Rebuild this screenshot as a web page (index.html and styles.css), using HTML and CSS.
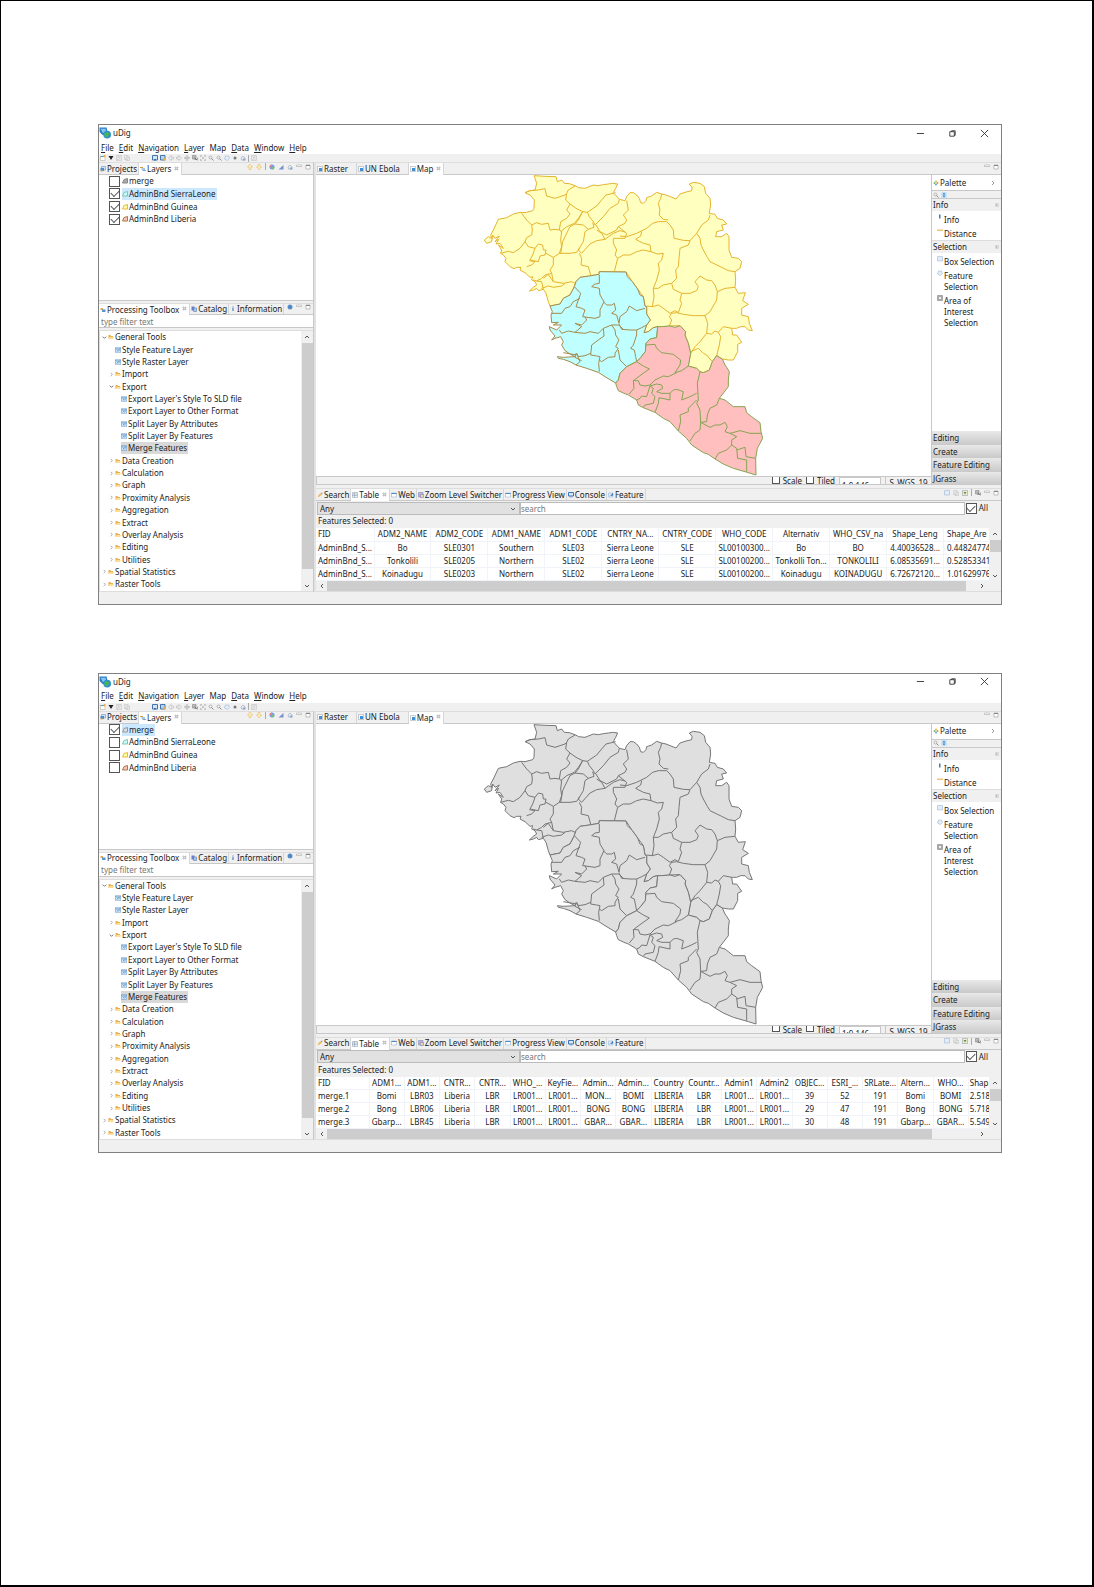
FILE: index.html
```
<!DOCTYPE html>
<html lang="en">
<head>
    <meta charset="UTF-8">
    <meta name="viewport" content="width=device-width, initial-scale=1.0">
    <title>uDig - Merge Features</title>
    <link rel="stylesheet" href="styles.css">
</head>
<body>
    <!-- Icons and the map, drawn once and reused in both windows -->
    <svg class="sprite" aria-hidden="true">
        <symbol id="i-app" viewBox="0 0 22 22"><path d="M1 1h13l2 11-9 3-6-6z" fill="#2a7fc9"/><path d="M3 3h9l1 6-6 2z" fill="#8cc6ee"/><circle cx="15" cy="14" r="7" fill="#2f8fd0"/><path d="M10 11l6-2 3 4-4 6-5-2z" fill="#46b558"/></symbol>
        <symbol id="i-folder" viewBox="0 0 12 12"><path d="M1 2h4l1 2h4v6H1z" fill="#e9b04f"/><path d="M3 6h9l-2 4H1z" fill="#ffdd92"/></symbol>
        <symbol id="i-tool" viewBox="0 0 12 12"><path d="M0 1h12v10H0z" fill="#5c96cf"/><path d="M1 3h10v7H1z" fill="#d3e6f7"/><path d="M3 4l4 5M8 4l-4 5M9 4v3" stroke="#3873b3" fill="none"/></symbol>
        <symbol id="i-map" viewBox="0 0 12 12"><path d="M1 1h10v10H1z" fill="#fff" stroke="#8a9aaa"/><path d="M4 4h6v6H4z" fill="#3d8fd6"/></symbol>
        <symbol id="i-projects" viewBox="0 0 12 12"><path d="M3 1h8v7H3z" fill="#cfe0f2" stroke="#5c86b4"/><path d="M1 4h7v6H1z" fill="#4f8dca"/><path d="M1 9h5v2H1z" fill="#e8b254"/></symbol>
        <symbol id="i-layers" viewBox="0 0 12 12"><path d="M0 2h6v2H0z" fill="#d89a3c"/><path d="M3 5h7v2H3z" fill="#4b8acb"/><path d="M5 8h7v2H5z" fill="#7aa6d6"/></symbol>
        <symbol id="i-toolbox" viewBox="0 0 12 12"><path d="M1 2h5v4H1z" fill="#e3a94a"/><path d="M4 5h7v5H4z" fill="#5a93cd"/></symbol>
        <symbol id="i-catalog" viewBox="0 0 12 12"><path d="M1 1h6v8H1z" fill="#6b7fc8"/><path d="M5 4h6v7H5z" fill="#a9c4ec" stroke="#4a6cb0"/></symbol>
        <symbol id="i-info" viewBox="0 0 12 12"><path d="M5 1h2v2H5zM5 4h2v6H5z" fill="#2f6fb3"/></symbol>
        <symbol id="i-close" viewBox="0 0 12 12"><path d="M2 2l8 8M10 2l-8 8" stroke="#9a9a9a" stroke-width="3"/><path d="M2 2l8 8M10 2l-8 8" stroke="#fff"/></symbol>
        <symbol id="i-search" viewBox="0 0 12 12"><path d="M1 9l5-6 4 2-6 5z" fill="#efb955"/><path d="M7 2l4-1-1 4z" fill="#8897a8"/></symbol>
        <symbol id="i-table" viewBox="0 0 12 12"><path d="M1 1h10v10H1z" fill="#eef3f9" stroke="#8495ad"/><path d="M1 4h10M1 7h10M5 1v10" stroke="#8495ad"/></symbol>
        <symbol id="i-window" viewBox="0 0 12 12"><path d="M1 2h10v8H1z" fill="#fff" stroke="#84a5c8"/><path d="M1 2h10v2H1z" fill="#4b8acb"/></symbol>
        <symbol id="i-zoomlevel" viewBox="0 0 12 12"><path d="M1 1h9v9H1z" fill="#b7b6dc" stroke="#7877ad"/><path d="M5 5h6v6H5z" fill="#e8dcb0" stroke="#7877ad"/></symbol>
        <symbol id="i-console" viewBox="0 0 12 12"><path d="M1 1h10v7H1z" fill="#d8e8fa" stroke="#3f74b5" stroke-width="2"/><path d="M3 10h6" stroke="#3f74b5"/></symbol>
        <symbol id="i-feature" viewBox="0 0 12 12"><path d="M1 2h9v8H1z" fill="#dce9f8" stroke="#8fb0d6"/><path d="M4 8l6-6v5z" fill="#2f6fc0"/></symbol>
        <symbol id="i-globe" viewBox="0 0 12 12"><circle cx="6" cy="6" r="5" fill="#5e96d4"/><path d="M2 6h8M6 2v8" stroke="#3a6ea8"/></symbol>
        <symbol id="i-search-mode" viewBox="0 0 12 12"><path d="M0 0h12v12H0z" fill="#cce4f7"/><path d="M6 1l3 4H3zM6 11L3 7h6z" fill="#2f7fc6"/></symbol>
        <symbol id="i-up" viewBox="0 0 12 12"><path d="M6 0l5 6H8v5H4V6H1z" fill="#fff0c0" stroke="#e2b14c"/></symbol>
        <symbol id="i-down" viewBox="0 0 12 12"><path d="M6 12L1 6h3V1h4v5h3z" fill="#fff0c0" stroke="#e2b14c"/></symbol>
        <symbol id="i-palette" viewBox="0 0 12 12"><circle cx="6" cy="3" r="2" fill="#e6b84a"/><circle cx="3" cy="6" r="2" fill="#72b86a"/><circle cx="9" cy="6" r="2" fill="#e58b4e"/><circle cx="6" cy="9" r="2" fill="#57a4d8"/></symbol>
        <symbol id="i-color" viewBox="0 0 12 12"><circle cx="6" cy="6" r="5" fill="#7b9be8"/><path d="M6 6V1a5 5 0 0 0-5 5z" fill="#e9837d"/><path d="M6 6h5a5 5 0 0 1-5 5z" fill="#78c07a"/></symbol>
        <symbol id="i-chart" viewBox="0 0 12 12"><path d="M1 11l10-9v9z" fill="#7a8fcf"/></symbol>
        <symbol id="i-edit" viewBox="0 0 12 12"><path d="M2 6l4-4 4 4-1 4H3z" fill="#e8eef5" stroke="#7f93ad"/><path d="M6 7h5v4H6z" fill="#8fa9c9"/></symbol>
        <symbol id="i-min" viewBox="0 0 12 12"><path d="M1 2h10v3H1z" fill="#fff" stroke="#999"/></symbol>
        <symbol id="i-max" viewBox="0 0 12 12"><path d="M2 2h8v8H2z" fill="#fff" stroke="#888"/><path d="M2 3h8" stroke="#888" stroke-width="2"/></symbol>
        <symbol id="i-new" viewBox="0 0 12 12"><path d="M1 3h9v8H1z" fill="#fff" stroke="#a9a58f"/><path d="M1 3h8" stroke="#5c96cf" stroke-width="2"/><path d="M9 0v5M7 2h5" stroke="#e7b347" stroke-width="2"/></symbol>
        <symbol id="i-caret" viewBox="0 0 12 12"><path d="M1 2h10l-5 8z" fill="#222"/></symbol>
        <symbol id="i-save" viewBox="0 0 12 12"><path d="M1 1h10v10H1z" fill="#eee" stroke="#bbb"/><path d="M4 1v4h4V1M3 11V8h6" stroke="#bbb" fill="none"/></symbol>
        <symbol id="i-copy" viewBox="0 0 12 12"><path d="M1 1h7v8H1zM4 4h7v7H4z" fill="#eee" stroke="#bbb"/></symbol>
        <symbol id="i-disk" viewBox="0 0 12 12"><path d="M1 1h10v9H1z" fill="#d3e4f5" stroke="#4374ad" stroke-width="2"/><path d="M4 8h4v3H4z" fill="#4374ad"/></symbol>
        <symbol id="i-export" viewBox="0 0 12 12"><path d="M1 1h9v9H1z" fill="#bcd5ee" stroke="#4374ad" stroke-width="2"/><path d="M6 6h6v5H6z" fill="#e2b04d"/></symbol>
        <symbol id="i-filter" viewBox="0 0 12 12"><path d="M1 1h10v10H1z" fill="#f4efc8" stroke="#7f93ad"/><path d="M3 4h6L6 9z" fill="#5f8f4a"/></symbol>
        <symbol id="i-back" viewBox="0 0 12 12"><path d="M1 6l5-5v3h5v4H6v3z" fill="#eee" stroke="#aaa"/></symbol>
        <symbol id="i-forward" viewBox="0 0 12 12"><path d="M11 6L6 1v3H1v4h5v3z" fill="#eee" stroke="#aaa"/></symbol>
        <symbol id="i-pan" viewBox="0 0 12 12"><path d="M6 1v10M1 6h10M4 3l2-2 2 2M4 9l2 2 2-2M3 4L1 6l2 2M9 4l2 2-2 2" fill="none" stroke="#888"/></symbol>
        <symbol id="i-refresh" viewBox="0 0 12 12"><path d="M1 1h7v7H1z" fill="#bbb" stroke="#777"/><path d="M5 5l6 6M5 9h6V5" stroke="#555" fill="none"/></symbol>
        <symbol id="i-extent" viewBox="0 0 12 12"><path d="M1 4V1h3M8 1h3v3M11 8v3H8M4 11H1V8M3 3l6 6M9 3l-6 6" fill="none" stroke="#999"/></symbol>
        <symbol id="i-lens" viewBox="0 0 12 12"><circle cx="5" cy="5" r="3" fill="#eee" stroke="#888"/><path d="M7 7l4 4" stroke="#888" stroke-width="2"/></symbol>
        <symbol id="i-dot" viewBox="0 0 12 12"><circle cx="6" cy="6" r="3" fill="#777"/></symbol>
        <symbol id="i-box" viewBox="0 0 12 12"><path d="M1 1h10v9H1z" fill="#e2edf8" stroke="#8fadd0"/></symbol>
        <symbol id="i-polygon" viewBox="0 0 12 12"><path d="M3 2l6 0 2 5-4 4-6-3z" fill="#e2edf8" stroke="#8fadd0"/></symbol>
        <symbol id="i-aoi" viewBox="0 0 12 12"><path d="M1 1h10v10H1z" fill="#aaa" stroke="#777"/><path d="M4 4h4v4H4z" fill="#eee"/></symbol>
        <symbol id="i-ruler" viewBox="0 0 12 12"><path d="M0 3h12v3H0z" fill="#efc37c"/></symbol>
        <symbol id="i-bar" viewBox="0 0 12 12"><path d="M4 1h3v8H4z" fill="#2f7fc6"/></symbol>
        <symbol id="i-shape" viewBox="0 0 12 12"><path d="M1 10L4 3l7-2v9z" fill="var(--shape)" stroke="var(--shape-line)" stroke-width="2"/></symbol>
        <symbol id="i-open" viewBox="0 0 12 12"><path d="M2 4l4 4 4-4" fill="none" stroke="#555" stroke-width="2"/></symbol>
        <symbol id="i-shut" viewBox="0 0 12 12"><path d="M4 2l4 4-4 4" fill="none" stroke="#999" stroke-width="2"/></symbol>
        <symbol id="i-chev-up" viewBox="0 0 12 12"><path d="M2 8l4-4 4 4" fill="none" stroke="#555" stroke-width="2"/></symbol>
        <symbol id="i-chev-left" viewBox="0 0 12 12"><path d="M8 2L4 6l4 4" fill="none" stroke="#555" stroke-width="2"/></symbol>
        <symbol id="i-chev-right" viewBox="0 0 12 12"><path d="M4 2l4 4-4 4" fill="none" stroke="#555" stroke-width="2"/></symbol>
        <symbol id="i-pin" viewBox="0 0 12 12"><path d="M2 4h8M2 8h8M5 4v4" fill="none" stroke="#999"/></symbol>

        <symbol id="west-africa" viewBox="3 15 918 903">
            <g class="guinea">
                <path d="M192 17L225 19 258 20 262 35 275 30 283 40 298 41 315 47 326 53 345 55 370 45 385 47 400 44 415 42 428 40 443 42 437 55 430 68 448 88 465 92 470 80 480 68 490 68 500 75 508 85 512 98 520 100 528 92 530 83 545 78 560 67 575 72 588 75 618 87 630 72 648 66 665 62 666 52 658 42 670 37 690 40 703 50 707 70 720 85 722 105 718 130 735 133 742 145 760 150 770 162 755 165 760 180 740 185 737 200 755 200 770 190 777 200 777 240 785 262 805 265 815 275 810 295 795 305 797 330 795 352 805 370 826 368 818 392 835 403 815 415 815 435 835 440 838 460 847 482 835 480 825 470 812 470 800 475 790 475 785 475 788 495 800 495 815 517 803 523 803 545 790 570 775 570 757 567 740 557 727 575 718 600 700 608 690 605 680 595 655 588 662 550 655 520 645 495 647 485 630 467 600 468 575 470 563 470 550 473 535 485 522 488 530 465 541 450 530 432 530 410 525 408 520 380 503 357 487 335 468 306 388 305 387 313 358 318 330 322 318 335 313 350 300 375 280 385 270 402 240 408 235 395 228 370 220 358 205 362 200 355 190 360 178 363 190 352 200 345 195 335 185 330 188 320 180 322 165 308 150 300 153 292 140 292 132 296 120 290 105 275 108 265 100 255 92 250 95 240 85 225 100 235 90 220 78 222 86 208 75 215 88 198 75 205 68 195 65 215 50 220 43 210 55 200 65 205 62 195 70 180 85 148 110 143 130 132 150 127 165 128 188 122 192 115 193 90 180 75 165 68 180 62 195 60 200 40z"/>
                <path class="edge" d="M165 68L180 62 205 60 225 56 230 78 255 85 285 75 290 70 295 60 315 48M290 70L287 90 300 102 318 115 338 125 352 127 380 108 395 90 408 75 437 68M300 102L290 120 300 132 290 145 272 155 268 180M338 125L325 145 313 160 290 170 272 185M352 127L358 140 370 155 375 165 400 140 420 115 445 100 448 88M338 125L325 150 315 162 340 165 355 178 372 172 368 158M378 165L390 185 410 195 440 180 445 170 465 160 470 150 460 135 475 120 470 92M155 130L170 150 185 165 187 180 185 195 170 203 165 215 150 235 130 248 115 244 92 250M185 165L200 158 215 163 235 160 240 180 255 178 268 180 275 185 272 210 275 230 268 250 250 262M165 215L175 230 195 235 205 222 218 225 220 240 228 240 225 255 210 258 205 275 180 270 188 255 195 235M228 250L250 262 250 285 240 300 245 310 225 315 215 325 200 333 190 330M170 290L185 285 195 275 178 272M268 250L300 250 320 247 328 235 325 240 340 215 345 185 355 178M315 162L300 170 285 200 278 215 272 250M328 250L335 265 333 285 355 290 362 315M325 240L335 250 360 222 380 212 405 208 395 190 380 180M405 208L430 190 450 182 465 186M445 170L470 190 465 205 430 205 430 220 440 240 435 255 443 265 433 305M450 198L470 200 500 190 530 175 548 160 565 155 590 155 600 165 610 180 612 205 640 211 660 212 680 190M575 72L572 85 565 100 570 120 567 135 580 148 595 150M515 185L512 198 497 208 520 220 540 225 543 245 520 240 500 245 480 255 460 255 443 265M543 245L562 252 580 250 575 270 565 280 568 300 560 330 550 355 552 380 547 410 530 408M660 212L655 225 630 235 627 265 625 290 617 300 620 325 605 340 580 345 565 355 550 355M680 190L695 165 715 150 720 135M680 190L690 205 693 225 700 240 712 262 720 275 755 292 775 302 795 305M605 340L610 358 635 370 630 390 635 400 625 428 615 422 600 430 580 415 565 405 547 410M635 370L660 370 680 362 685 350 675 335 690 318 710 330 725 332 735 345 742 365 740 390 720 425 705 437 670 437 640 433 620 428 605 430 598 440 605 450 598 468M742 365L765 355 795 352M705 437L713 460 710 490 690 515 675 530 662 550M710 490L725 492 735 483 745 487 752 500 748 525 740 557M745 487L760 470 785 475M662 545L685 535 700 550 710 555 727 575M245 310L250 335 280 340 305 335 335 350M215 355L235 348 250 352 275 348 285 340M200 333L215 335 220 358M220 325L235 313 243 325 250 335"/>
            </g>
            <g class="sierra">
                <path d="M240 408L270 402 280 385 300 375 313 350 318 335 330 322 358 318 387 313 388 305 468 306 472 320 487 335 503 357 510 375 520 380 525 408 530 410 530 432 541 450 530 465 522 488 535 485 550 473 563 470 560 503 540 507 528 520 526 545 510 565 500 575 470 590 450 610 445 630 437 639 405 620 385 607 350 595 318 585 300 575 280 568 265 565 262 560 280 562 315 560 300 552 285 542 275 525 280 515 272 500 255 505 245 510 255 498 240 480 238 470 260 480 275 465 250 465 265 457 245 458 243 435 247 425z"/>
                <path class="edge" d="M313 350L332 370 325 390 318 410 335 415 345 420 338 440 375 445 390 440 390 420 402 395 390 375 388 355 365 350 375 342 388 340 388 315M245 430L275 430 285 415 300 410 310 395 330 385M400 395L410 405 425 405 433 400 437 420 425 430 440 435 447 460 450 440 470 425 478 408 500 422 525 415M447 462L455 478 480 480 500 480 515 473 530 465M345 440L350 450 335 465 315 460 335 470 315 487 295 483 275 490 268 480M315 487L345 490 360 485 385 490 400 475 425 465 447 465 460 478M400 475L402 498 385 510 365 525 362 555 380 558 390 560 386 580 388 605M425 465L435 480 437 495 447 510 437 530 445 535 435 550 435 560 415 562 395 575 388 570M445 540L450 570 470 590M500 480L500 495 490 525 482 535 493 540 497 560 500 575M362 550L345 557 325 560 320 550 330 575 318 585M318 550L315 562 335 572M280 548L320 555"/>
            </g>
            <g class="liberia">
                <path d="M563 470L575 470 600 468 615 472 630 467 647 485 645 495 655 520 662 550 655 588 680 595 690 605 700 608 718 600 727 575 740 557 757 567 765 585 770 592 778 605 775 630 775 650 748 685 765 690 790 710 825 710 830 728 845 740 870 758 873 785 878 805 870 820 862 835 857 865 858 915 835 908 825 905 790 895 760 882 735 867 715 853 700 848 665 825 650 805 625 783 600 755 580 745 555 727 520 713 505 705 500 690 475 675 462 670 445 662 440 650 437 639 445 630 450 610 470 590 500 575 510 565 526 545 528 520 540 507 560 503z"/>
                <path class="edge" d="M528 525L555 523 560 535 575 548 610 553 632 570 630 585 615 608 635 602 655 588M500 575L520 588 538 597 510 617 490 632 505 632 510 645 525 648 540 645 555 630 580 618 595 620 620 608M490 632L492 655 478 672M540 648L530 680 515 678 510 685 500 690M540 648L550 655 545 670 555 680 550 700 525 705 520 712M540 648L560 642 575 645 578 655 560 665 575 670 600 670 610 660 620 658 640 665 635 690 660 680 680 670M600 670L600 690 567 683 565 700 555 727M690 605L682 640 685 690 680 700 690 720 692 757M680 690L655 715 655 725 630 735 632 755 625 783M748 685L740 705 720 715 712 735 710 755 692 757 690 780 675 790 665 805 660 813M692 757L720 772 735 765 750 765 765 757 772 770 765 785 780 790 810 782 840 790 873 790M780 790L800 800 785 810 785 825 770 840 745 850 735 867M785 825L800 835 803 865 830 870 830 905M800 840L825 832 828 860 857 865"/>
            </g>
        </symbol>
    </svg>

    <main class="page" id="page"></main>

    <template id="windowTemplate">
        <section class="window">
            <header class="titlebar">
                <svg class="app-icon"><use href="#i-app"/></svg>
                <span class="title">uDig</span>
                <button class="win-btn" aria-label="Minimize"><svg viewBox="0 0 10 10"><path d="M1 5h8"/></svg></button>
                <button class="win-btn" aria-label="Restore"><svg viewBox="0 0 10 10"><path d="M2 3h5v5H2zM4 3V2h4v5H7"/></svg></button>
                <button class="win-btn" aria-label="Close"><svg viewBox="0 0 10 10"><path d="M1 1l8 8M9 1L1 9"/></svg></button>
            </header>
            <nav class="menubar">
                <button><u>F</u>ile</button>
                <button><u>E</u>dit</button>
                <button><u>N</u>avigation</button>
                <button><u>L</u>ayer</button>
                <button>Map</button>
                <button><u>D</u>ata</button>
                <button><u>W</u>indow</button>
                <button><u>H</u>elp</button>
            </nav>
            <div class="toolbar">
                <button aria-label="New"><svg><use href="#i-new"/></svg></button>
                <button aria-label="New menu"><svg><use href="#i-caret"/></svg></button>
                <button aria-label="Save"><svg><use href="#i-save"/></svg></button>
                <button aria-label="Copy"><svg><use href="#i-copy"/></svg></button>
                <span class="toolbar-gap"></span>
                <button aria-label="Commit"><svg><use href="#i-disk"/></svg></button>
                <button aria-label="Rollback"><svg><use href="#i-export"/></svg></button>
                <button aria-label="Back"><svg><use href="#i-back"/></svg></button>
                <button aria-label="Forward"><svg><use href="#i-forward"/></svg></button>
                <button aria-label="Pan"><svg><use href="#i-pan"/></svg></button>
                <button aria-label="Refresh"><svg><use href="#i-refresh"/></svg></button>
                <button aria-label="Extent"><svg><use href="#i-extent"/></svg></button>
                <button aria-label="Zoom in"><svg><use href="#i-lens"/></svg></button>
                <button aria-label="Zoom out"><svg><use href="#i-lens"/></svg></button>
                <button aria-label="Zoom layer"><svg><use href="#i-polygon"/></svg></button>
                <button aria-label="Stop"><svg><use href="#i-dot"/></svg></button>
                <button aria-label="Edit"><svg><use href="#i-edit"/></svg></button>
                <span class="bar"></span>
                <button aria-label="Paste"><svg><use href="#i-save"/></svg></button>
            </div>

            <div class="workbench">
                <div class="side">
                    <div class="tabs">
                        <button class="tab"><svg><use href="#i-projects"/></svg>Projects</button>
                        <button class="tab active"><svg><use href="#i-layers"/></svg>Layers<svg class="x"><use href="#i-close"/></svg></button>
                        <span class="view-tools">
                            <svg><use href="#i-up"/></svg><svg><use href="#i-down"/></svg><span class="bar"></span><svg><use href="#i-color"/></svg><svg><use href="#i-chart"/></svg><svg><use href="#i-edit"/></svg><svg><use href="#i-min"/></svg><svg><use href="#i-max"/></svg>
                        </span>
                    </div>
                    <div class="layers"><ul class="layer-list"></ul></div>
                    <div class="tabs second">
                        <button class="tab active"><svg><use href="#i-toolbox"/></svg>Processing Toolbox<svg class="x"><use href="#i-close"/></svg></button>
                        <button class="tab"><svg><use href="#i-catalog"/></svg>Catalog</button>
                        <button class="tab"><svg><use href="#i-info"/></svg>Information</button>
                        <span class="view-tools"><svg><use href="#i-globe"/></svg><svg><use href="#i-min"/></svg><svg><use href="#i-max"/></svg></span>
                    </div>
                    <input class="filter" type="text" placeholder="type filter text" aria-label="Filter">
                    <div class="toolbox">
                        <ul class="tree"></ul>
                        <div class="vscroll">
                            <svg><use href="#i-chev-up"/></svg>
                            <span class="thumb"></span>
                            <svg><use href="#i-open"/></svg>
                        </div>
                    </div>
                </div>

                <div class="content">
                    <div class="tabs">
                        <button class="tab wide"><svg><use href="#i-map"/></svg>Raster</button>
                        <button class="tab wide"><svg><use href="#i-map"/></svg>UN Ebola</button>
                        <button class="tab active"><svg><use href="#i-map"/></svg>Map<svg class="x"><use href="#i-close"/></svg></button>
                        <span class="view-tools"><svg><use href="#i-min"/></svg><svg><use href="#i-max"/></svg></span>
                    </div>
                    <div class="editor">
                        <div class="map-area">
                            <div class="canvas"><svg class="map"><use href="#west-africa"/></svg></div>
                            <div class="map-status">
                                <label><input type="checkbox"> Scale</label>
                                <label><input type="checkbox"> Tiled</label>
                                <input class="scale" type="text" value="1:9,146,..." aria-label="Map scale">
                                <button class="crs">S_WGS_19</button>
                            </div>
                        </div>
                        <aside class="palette">
                            <div class="palette-title"><svg><use href="#i-palette"/></svg>Palette<svg class="end"><use href="#i-shut"/></svg></div>
                            <div class="palette-tools"><svg><use href="#i-lens"/></svg><svg><use href="#i-search-mode"/></svg></div>
                            <h3>Info<svg><use href="#i-pin"/></svg></h3>
                            <ul>
                                <li><svg><use href="#i-bar"/></svg>Info</li>
                                <li><svg><use href="#i-ruler"/></svg>Distance</li>
                            </ul>
                            <h3>Selection<svg><use href="#i-pin"/></svg></h3>
                            <ul>
                                <li><svg><use href="#i-box"/></svg>Box Selection</li>
                                <li><svg><use href="#i-polygon"/></svg>Feature Selection</li>
                                <li><svg><use href="#i-aoi"/></svg>Area of Interest Selection</li>
                            </ul>
                            <div class="drawers">
                                <button>Editing</button>
                                <button>Create</button>
                                <button>Feature Editing</button>
                                <button>JGrass</button>
                            </div>
                        </aside>
                    </div>

                    <div class="tabs second">
                        <button class="tab"><svg><use href="#i-search"/></svg>Search</button>
                        <button class="tab active"><svg><use href="#i-table"/></svg>Table<svg class="x"><use href="#i-close"/></svg></button>
                        <button class="tab"><svg><use href="#i-window"/></svg>Web</button>
                        <button class="tab"><svg><use href="#i-zoomlevel"/></svg>Zoom Level Switcher</button>
                        <button class="tab"><svg><use href="#i-window"/></svg>Progress View</button>
                        <button class="tab"><svg><use href="#i-console"/></svg>Console</button>
                        <button class="tab"><svg><use href="#i-feature"/></svg>Feature</button>
                        <span class="view-tools"><svg><use href="#i-box"/></svg><svg><use href="#i-copy"/></svg><svg><use href="#i-filter"/></svg><span class="bar"></span><svg><use href="#i-refresh"/></svg><svg><use href="#i-min"/></svg><svg><use href="#i-max"/></svg></span>
                    </div>
                    <div class="query">
                        <div class="combo">
                            <select aria-label="Attribute"><option>Any</option></select>
                            <svg><use href="#i-open"/></svg>
                        </div>
                        <input class="query-text" type="text" placeholder="search" aria-label="Search">
                        <label><input type="checkbox" checked> All</label>
                    </div>
                    <p class="selected-count">Features Selected: 0</p>
                    <div class="grid">
                        <div class="grid-view"><table><colgroup></colgroup><thead></thead><tbody></tbody></table></div>
                        <div class="vscroll">
                            <svg><use href="#i-chev-up"/></svg>
                            <span class="thumb short"></span>
                            <svg><use href="#i-open"/></svg>
                        </div>
                    </div>
                    <div class="hscroll">
                        <svg><use href="#i-chev-left"/></svg>
                        <span class="track"><span class="thumb"></span></span>
                        <svg><use href="#i-chev-right"/></svg>
                    </div>
                </div>
            </div>
            <footer class="statusbar"></footer>
        </section>
    </template>

    <script src="app.js"></script>
</body>
</html>
```
FILE: styles.css
```
:root {
    --face: #f0f0f0;
    --line: #c8c8c8;
    --thumb: #cdcdcd;
    --text: #222;
}

* {
    box-sizing: border-box;
}

body {
    margin: 0;
    min-height: 100vh;
    display: flex;
    background: #fff;
    border: solid #000;
    border-width: 1px 2px 2px 1px;
    font-family: "Noto Sans", "Open Sans", sans-serif;
    font-size: 8px;
    line-height: 12px;
    color: var(--text);
}

button, input, select {
    font: inherit;
    color: inherit;
    margin: 0;
    padding: 0;
    border: 0;
    border-radius: 0;
    background: none;
    outline: none;
}

ul, p, h3 {
    margin: 0;
    padding: 0;
    list-style: none;
    font-size: inherit;
    font-weight: normal;
}

svg {
    display: block;
    flex: none;
    width: 6px;
    height: 6px;
}

.sprite {
    position: absolute;
    width: 0;
    height: 0;
}

.page {
    flex: 1;
    min-width: 0;
    padding: 123px 90px 80px 97px;
    display: flex;
    flex-direction: column;
    gap: 68px;
}

.window {
    border: 1px solid #808080;
    background: var(--face);
    display: flex;
    flex-direction: column;
}

/* title, menu, toolbar */
.titlebar {
    height: 16px;
    display: flex;
    align-items: center;
    padding-right: 1px;
    background: #fff;
}

.app-icon {
    width: 12px;
    height: 12px;
    margin-right: 2px;
}

.title {
    flex: 1;
}

.win-btn {
    width: 32px;
    display: flex;
    justify-content: center;
}

.win-btn svg {
    width: 9px;
    height: 9px;
    fill: none;
    stroke: #333;
}

.menubar {
    height: 13px;
    display: flex;
    align-items: center;
    gap: 5px;
    padding-left: 2px;
    background: #fff;
}

.menubar u {
    text-underline-offset: 1px;
}

.toolbar {
    height: 8px;
    display: flex;
    align-items: center;
    gap: 2px;
    padding-left: 1px;
}

.toolbar-gap {
    width: 18px;
}

.bar {
    width: 1px;
    height: 7px;
    background: #aaa;
}

.workbench {
    display: flex;
    gap: 2px;
    background: #e2e2e2;
}

.side {
    width: 215px;
    flex: none;
    display: flex;
    flex-direction: column;
    background: var(--face);
    border-right: 1px solid var(--line);
}

.content {
    flex: 1;
    min-width: 0;
    background: var(--face);
}

/* tabs */
.tabs {
    height: 13px;
    display: flex;
    background: var(--face);
    border-top: 1px solid #ddd;
    border-bottom: 1px solid var(--line);
}

.tab {
    display: flex;
    align-items: center;
    gap: 1px;
    padding: 0 1px;
    white-space: nowrap;
    border-right: 1px solid #d6d6d6;
}

.tab.wide {
    padding-right: 8px;
}

.tab.active {
    margin-bottom: -1px;
    background: #fff;
}

.tab .x {
    width: 5px;
    height: 5px;
    margin: 0 1px 2px 2px;
}

.view-tools {
    margin-left: auto;
    padding: 0 2px 4px 0;
    display: flex;
    align-items: center;
    gap: 3px;
}

/* layers */
.layers {
    height: 126px;
    padding-left: 10px;
    background: #fff;
    border-bottom: 1px solid var(--line);
}

.layer-list {
    height: 51px;
    display: grid;
    grid-auto-rows: 1fr;
}

.layer-list label {
    display: flex;
    align-items: center;
    gap: 2px;
}

.layer-name {
    display: flex;
    align-items: center;
    gap: 1px;
    padding-right: 1px;
}

.layer-name.selected {
    background: #cce8ff;
}

.shape-merge {
    --shape: #aaa;
    --shape-line: #888;
}

.selected .shape-merge {
    --shape: #ddd;
    --shape-line: #999;
}

.shape-sierra {
    --shape: #bfffff;
    --shape-line: #8cc0a8;
}

.shape-guinea {
    --shape: #ffffa0;
    --shape-line: #e8b840;
}

.shape-liberia {
    --shape: #ffbfbf;
    --shape-line: #a08040;
}

input[type="checkbox"] {
    appearance: none;
    flex: none;
    width: 11px;
    height: 11px;
    display: grid;
    place-items: center;
    background: #fff;
    border: 1px solid #555;
}

input[type="checkbox"]:checked::after {
    content: "";
    width: 7px;
    height: 4px;
    margin-bottom: 2px;
    border: solid #555;
    border-width: 0 0 1px 1px;
    transform: rotate(-45deg);
}

.tabs.second {
    margin-top: 2px;
}

.side .tabs.second {
    height: 12px;
}

.content .tabs.second {
    margin-top: 3px;
}

/* toolbox */
.filter {
    height: 13px;
    padding: 0 2px;
    background: #fff;
    border-bottom: 1px solid var(--line);
}

::placeholder {
    color: #777;
    opacity: 1;
}

.toolbox {
    flex: 1;
    margin-top: 2px;
    display: flex;
    background: #fff;
    border: 1px solid #ddd;
    border-right: 0;
}

.tree {
    flex: 1;
    display: grid;
    grid-auto-rows: 1fr;
}

.tree li {
    display: flex;
    align-items: center;
    padding-left: 2px;
    gap: 1px;
}

.tree .level-2 {
    padding-left: 9px;
}

.tree .level-3 {
    padding-left: 15px;
}

.tree .twisty {
    width: 5px;
    height: 5px;
}

.tree .node {
    display: flex;
    align-items: center;
    gap: 1px;
    padding-right: 1px;
}

.tree .selected {
    background: #d9d9d9;
}

/* scroll bars */
.vscroll {
    width: 12px;
    flex: none;
    display: flex;
    flex-direction: column;
    align-items: center;
    gap: 3px;
    padding: 3px 0 2px;
    background: var(--face);
}

.thumb {
    display: block;
    background: var(--thumb);
}

.vscroll .thumb {
    width: 11px;
    height: 226px;
}

.vscroll .thumb.short {
    height: 12px;
}

.vscroll svg:last-child {
    margin-top: auto;
}

.hscroll {
    height: 11px;
    display: flex;
    align-items: center;
    gap: 2px;
    padding: 0 16px 0 3px;
    border-bottom: 1px solid #ddd;
}

.track {
    flex: 1;
    margin-right: 11px;
}

.track .thumb {
    height: 10px;
}

.merged .track .thumb {
    margin-right: 34px;
}

/* map editor */
.editor {
    display: flex;
}

.map-area {
    flex: 1;
    min-width: 0;
}

.canvas {
    height: 301px;
    display: flex;
    justify-content: center;
    overflow: hidden;
    background: #fff;
}

.map {
    width: 306px;
    height: 301px;
}

/* only the top of the scale box and CRS button shows in this strip */
.map-status {
    height: 9px;
    display: flex;
    justify-content: flex-end;
    gap: 4px;
    overflow: hidden;
    border: 1px solid var(--line);
    border-right: 0;
}

.map-status label {
    height: 8px;
    display: flex;
    align-items: center;
    gap: 3px;
}

.map-status input[type="checkbox"] {
    width: 8px;
    height: 8px;
    margin-bottom: 3px;
}

.scale {
    width: 42px;
    height: 16px;
    padding: 0 2px;
    background: #fff;
    border: 1px solid var(--line);
}

.crs {
    width: 46px;
    height: 12px;
    border-left: 1px solid var(--line);
}

.guinea, .sierra, .liberia {
    stroke-width: 3px;
    stroke-linejoin: round;
}

.guinea {
    fill: var(--area, #ffffbf);
    stroke: var(--edge, #e6b42e);
}

.sierra {
    fill: var(--area, #bfffff);
    stroke: var(--edge, #a58a4c);
}

.liberia {
    fill: var(--area, #ffbfbf);
    stroke: var(--edge, #86a452);
}

.edge {
    fill: none;
}

.merged .map {
    --area: #dfdfdf;
    --edge: #777;
}

/* palette */
.palette {
    width: 70px;
    flex: none;
    display: flex;
    flex-direction: column;
    background: #fff;
    border-left: 1px solid var(--line);
}

.palette-title {
    height: 15px;
    display: flex;
    align-items: center;
    gap: 1px;
    padding: 0 5px 0 1px;
}

.palette-title .end {
    margin-left: auto;
}

.palette-tools {
    height: 9px;
    display: flex;
    align-items: center;
    gap: 2px;
    padding-left: 1px;
    background: var(--face);
    border: solid var(--line);
    border-width: 1px 0;
}

.palette h3 {
    height: 12px;
    display: flex;
    align-items: center;
    justify-content: space-between;
    padding: 0 1px;
    background: var(--face);
}

.palette ul {
    padding-left: 5px;
}

.palette ul + h3 {
    height: 13px;
    margin-top: 1px;
    border-top: 1px solid #ddd;
}

.palette li {
    display: flex;
    gap: 1px;
    padding-top: 3px;
    line-height: 11px;
}

.drawers {
    height: 54px;
    margin-top: auto;
    display: grid;
    grid-auto-rows: 1fr;
}

.drawers button {
    padding-left: 1px;
    text-align: left;
    line-height: 12px;
    border-top: 1px solid #e8e8e8;
    background: linear-gradient(#e6e6e6, #c9c9c9);
}

/* table view */
.query {
    height: 14px;
    display: flex;
    align-items: center;
    padding-left: 1px;
}

.combo {
    width: 203px;
    position: relative;
}

.combo select {
    appearance: none;
    width: 100%;
    height: 13px;
    padding-left: 2px;
    background: #e1e1e1;
    border: 1px solid #bbb;
}

.combo svg {
    position: absolute;
    right: 4px;
    top: 4px;
    pointer-events: none;
}

.query-text {
    flex: 1;
    height: 13px;
    min-width: 0;
    background: #fff;
    border: 1px solid #bbb;
}

.query label {
    display: flex;
    align-items: center;
    gap: 2px;
    padding: 0 13px 0 1px;
}

.selected-count {
    padding-left: 2px;
    height: 13px;
}

.grid {
    display: flex;
    background: #fff;
}

.grid-view {
    flex: 1;
    min-width: 0;
    overflow: hidden;
}

.grid table {
    width: 685px;
    table-layout: fixed;
    border-collapse: collapse;
}

.merged .grid table {
    width: 688px;
}

.col-fid {
    width: 58px;
}

.merged .col-fid {
    width: 53px;
}

.grid th, .grid td {
    height: 13px;
    padding: 0 1px;
    overflow: hidden;
    text-overflow: ellipsis;
    white-space: nowrap;
    text-align: center;
    font-weight: normal;
    border: 1px solid #f0f3f7;
    border-width: 0 1px 1px 0;
}

.grid th:first-child, .grid td:first-child {
    padding-left: 2px;
    text-align: left;
}

/* the last column runs under the scroll bar */
.grid th:last-child, .grid td:last-child {
    text-align: left;
    text-overflow: clip;
}

.source th:last-child, .source td:last-child {
    padding-left: 3px;
}

.statusbar {
    height: 12px;
}
```
FILE: app.js
```
const layers = [
    { name: 'merge', shape: 'merge' },
    { name: 'AdminBnd SierraLeone', shape: 'sierra' },
    { name: 'AdminBnd Guinea', shape: 'guinea' },
    { name: 'AdminBnd Liberia', shape: 'liberia' }
];

// [level, label, kind]
const toolbox = [
    [1, 'General Tools', 'open'],
    [2, 'Style Feature Layer', 'tool'],
    [2, 'Style Raster Layer', 'tool'],
    [2, 'Import', 'shut'],
    [2, 'Export', 'open'],
    [3, "Export Layer's Style To SLD file", 'tool'],
    [3, 'Export Layer to Other Format', 'tool'],
    [3, 'Split Layer By Attributes', 'tool'],
    [3, 'Split Layer By Features', 'tool'],
    [3, 'Merge Features', 'tool'],
    [2, 'Data Creation', 'shut'],
    [2, 'Calculation', 'shut'],
    [2, 'Graph', 'shut'],
    [2, 'Proximity Analysis', 'shut'],
    [2, 'Aggregation', 'shut'],
    [2, 'Extract', 'shut'],
    [2, 'Overlay Analysis', 'shut'],
    [2, 'Editing', 'shut'],
    [2, 'Utilities', 'shut'],
    [1, 'Spatial Statistics', 'shut'],
    [1, 'Raster Tools', 'shut']
];

const windows = [
    {
        className: 'source',
        checked: [1, 2, 3],
        selected: 1,
        columns: ['FID', 'ADM2_NAME', 'ADM2_CODE', 'ADM1_NAME', 'ADM1_CODE', 'CNTRY_NA...', 'CNTRY_CODE', 'WHO_CODE', 'Alternativ', 'WHO_CSV_na', 'Shape_Leng', 'Shape_Are'],
        rows: [
            ['AdminBnd_S...', 'Bo', 'SLE0301', 'Southern', 'SLE03', 'Sierra Leone', 'SLE', 'SL00100300...', 'Bo', 'BO', '4.40036528...', '0.44824774'],
            ['AdminBnd_S...', 'Tonkolili', 'SLE0205', 'Northern', 'SLE02', 'Sierra Leone', 'SLE', 'SL00100200...', 'Tonkolli Ton...', 'TONKOLILI', '6.08535691...', '0.52853341'],
            ['AdminBnd_S...', 'Koinadugu', 'SLE0203', 'Northern', 'SLE02', 'Sierra Leone', 'SLE', 'SL00100200...', 'Koinadugu', 'KOINADUGU', '6.72672120...', '1.01629976']
        ]
    },
    {
        className: 'merged',
        checked: [0],
        selected: 0,
        columns: ['FID', 'ADM1...', 'ADM1...', 'CNTR...', 'CNTR...', 'WHO_...', 'KeyFie...', 'Admin...', 'Admin...', 'Country', 'Countr...', 'Admin1', 'Admin2', 'OBJEC...', 'ESRI_...', 'SRLate...', 'Altern...', 'WHO...', 'Shap'],
        rows: [
            ['merge.1', 'Bomi', 'LBR03', 'Liberia', 'LBR', 'LR001...', 'LR001...', 'MON...', 'BOMI', 'LIBERIA', 'LBR', 'LR001...', 'LR001...', '39', '52', '191', 'Bomi', 'BOMI', '2.518'],
            ['merge.2', 'Bong', 'LBR06', 'Liberia', 'LBR', 'LR001...', 'LR001...', 'BONG', 'BONG', 'LIBERIA', 'LBR', 'LR001...', 'LR001...', '29', '47', '191', 'Bong', 'BONG', '5.718'],
            ['merge.3', 'Gbarp...', 'LBR45', 'Liberia', 'LBR', 'LR001...', 'LR001...', 'GBAR...', 'GBAR...', 'LIBERIA', 'LBR', 'LR001...', 'LR001...', '30', '48', '191', 'Gbarp...', 'GBAR...', '5.549']
        ]
    }
];

const page = document.getElementById('page');
const template = document.getElementById('windowTemplate');

function icon(name, className) {
    return `<svg class="${className || ''}"><use href="#i-${name}"/></svg>`;
}

windows.forEach(win => {
    const node = template.content.cloneNode(true);
    node.querySelector('.window').classList.add(win.className);

    node.querySelector('.layer-list').innerHTML = layers.map((layer, i) => `
        <li><label>
            <input type="checkbox" ${win.checked.includes(i) ? 'checked' : ''}>
            <span class="layer-name ${win.selected === i ? 'selected' : ''}">${icon('shape', 'shape-' + layer.shape)}${layer.name}</span>
        </label></li>`).join('');

    node.querySelector('.tree').innerHTML = toolbox.map(([level, label, kind]) => `
        <li class="level-${level}">
            ${kind === 'tool' ? '<span class="twisty"></span>' : icon(kind, 'twisty')}
            <span class="node ${label === 'Merge Features' ? 'selected' : ''}">${icon(kind === 'tool' ? 'tool' : 'folder')}${label}</span>
        </li>`).join('');

    node.querySelector('colgroup').innerHTML = win.columns.map((c, i) => `<col class="${i ? 'col' : 'col-fid'}">`).join('');
    node.querySelector('thead').innerHTML = '<tr>' + win.columns.map(c => `<th>${c}</th>`).join('') + '</tr>';
    node.querySelector('tbody').innerHTML = win.rows.map(row => '<tr>' + row.map(c => `<td>${c}</td>`).join('') + '</tr>').join('');

    page.appendChild(node);
});
```
